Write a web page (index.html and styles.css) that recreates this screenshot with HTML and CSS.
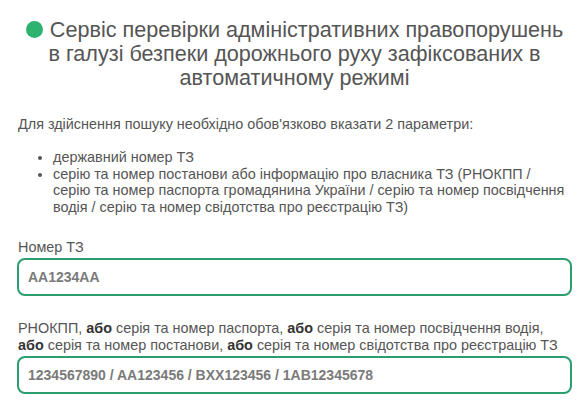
FILE: index.html
```html
<!DOCTYPE html>
<html lang="uk">
<head>
<meta charset="utf-8">
<title>Сервіс перевірки адміністративних правопорушень</title>
<link rel="stylesheet" href="styles.css">
</head>
<body>
<main class="page">
  <h1 class="title"><span class="dot"></span>Сервіс перевірки адміністративних правопорушень<br>в галузі безпеки дорожнього руху зафіксованих в<br>автоматичному режимі</h1>
  <p class="intro">Для здійснення пошуку необхідно обов'язково вказати 2 параметри:</p>
  <ul class="params">
    <li>державний номер ТЗ</li>
    <li>серію та номер постанови або інформацію про власника ТЗ (РНОКПП /<br>серію та номер паспорта громадянина України / серію та номер посвідчення<br>водія / серію та номер свідотства про реєстрацію ТЗ)</li>
  </ul>
  <div class="field">
    <label class="label" for="plate">Номер ТЗ</label>
    <input class="input" id="plate" type="text" placeholder="AA1234AA">
  </div>
  <div class="field">
    <label class="label" for="doc">РНОКПП, <b>або</b> серія та номер паспорта, <b>або</b> серія та номер посвідчення водія,<br><b>або</b> серія та номер постанови, <b>або</b> серія та номер свідотства про реєстрацію ТЗ</label>
    <input class="input" id="doc" type="text" placeholder="1234567890 / AA123456 / BXX123456 / 1AB12345678">
  </div>
</main>
</body>
</html>
```
FILE: styles.css
```css
html, body {
  margin: 0;
  padding: 0;
  background: #ffffff;
}
body {
  font-family: "Liberation Sans", Arial, sans-serif;
  font-size: 14.4px;
  line-height: 16.4px;
  color: #555555;
}
.page {
  padding: 18px 13px 0 17px;
}
.title {
  margin: 0;
  font-size: 21.6px;
  line-height: 24px;
  font-weight: normal;
  text-align: center;
  color: #555555;
  white-space: nowrap;
}
.dot {
  display: inline-block;
  width: 17px;
  height: 17px;
  border-radius: 50%;
  background: #2db36f;
  margin-right: 7px;
  vertical-align: -1px;
}
.intro {
  margin: 26px 0 0 1px;
}
.params {
  margin: 17px 0 0 0;
  padding-left: 36px;
  white-space: nowrap;
}
.field {
  margin-top: 24px;
  display: flex;
  flex-direction: column;
}
.label {
  margin: 0 0 3px 1px;
  white-space: nowrap;
}
.label b {
  color: #333333;
}
.input {
  box-sizing: border-box;
  height: 38px;
  width: 100%;
  border: 2px solid #2a9f6d;
  border-radius: 8px;
  padding: 0 9px;
  font-family: "Liberation Sans", Arial, sans-serif;
  font-size: 14px;
  font-weight: bold;
  color: #555555;
  background: #ffffff;
  outline: none;
}
.input::placeholder {
  color: #7a7a7a;
  opacity: 1;
}
```
